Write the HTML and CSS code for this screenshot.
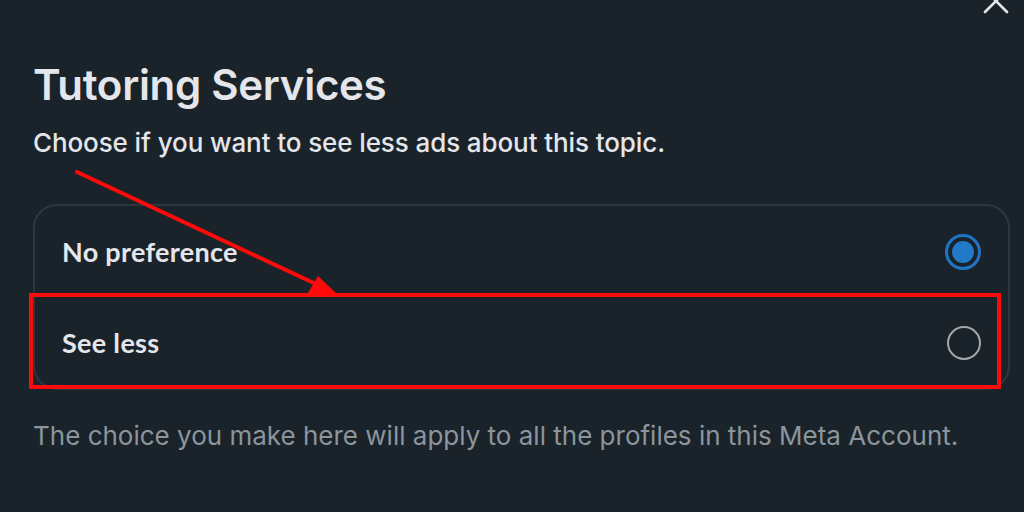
FILE: index.html
```html
<!DOCTYPE html>
<html>
<head>
<meta charset="utf-8">
<link rel="stylesheet" href="styles.css">
</head>
<body>
<div class="dialog">
  <button class="close" aria-label="Close">
    <svg width="30" height="30" viewBox="0 0 30 30"><path d="M4 4 L26 26 M26 4 L4 26" stroke="#e4e6eb" stroke-width="2.6" stroke-linecap="round" fill="none"/></svg>
  </button>
  <h1 class="title">Tutoring Services</h1>
  <p class="subtitle">Choose if you want to see less ads about this topic.</p>
  <div class="options">
    <label class="option">
      <span class="option-label">No preference</span>
      <span class="radio radio-on"><span class="dot"></span></span>
    </label>
    <label class="option">
      <span class="option-label">See less</span>
      <span class="radio"></span>
    </label>
  </div>
  <p class="footnote">The choice you make here will apply to all the profiles in this Meta Account.</p>
  <svg class="annot" width="1024" height="512" viewBox="0 0 1024 512">
    <rect x="31" y="295" width="968" height="92" fill="none" stroke="#ff0a0a" stroke-width="4"/>
    <line x1="77" y1="172" x2="318" y2="285" stroke="#ff0a0a" stroke-width="4" stroke-linecap="round"/>
    <polygon points="336,293 308,293 318,276" fill="#ff0a0a"/>
  </svg>
</div>
</body>
</html>
```

FILE: styles.css
```css
html, body {
  margin: 0;
  padding: 0;
  background: #1a2329;
}
body {
  width: 1024px;
  height: 512px;
  overflow: hidden;
  font-family: "Inter", "Noto Sans", sans-serif;
  color: #e4e6eb;
}
.dialog {
  position: relative;
  padding: 58px 14px 0 33px;
}
.close {
  position: absolute;
  top: -14px;
  right: 13px;
  background: none;
  border: 0;
  padding: 0;
  width: 30px;
  height: 30px;
}
.title {
  margin: 0;
  font-size: 42px;
  font-weight: 600;
  line-height: 54px;
  letter-spacing: -0.3px;
}
.subtitle {
  margin: 14px 0 0;
  font-size: 26px;
  font-weight: 500;
  line-height: 34px;
  letter-spacing: -0.1px;
}
.options {
  margin-top: 44px;
  border: 2px solid #2c3840;
  border-radius: 24px;
  display: flex;
  flex-direction: column;
}
.option {
  height: 91px;
  display: flex;
  align-items: center;
  justify-content: space-between;
  padding: 0 27px 0 27px;
}
.option-label {
  font-family: "Lato", "Inter", sans-serif;
  font-weight: 700;
  font-size: 27px;
  letter-spacing: 0.3px;
}
.radio {
  width: 30px;
  height: 30px;
  border: 2.5px solid #a3a8ad;
  border-radius: 50%;
  display: flex;
  align-items: center;
  justify-content: center;
}
.radio-on {
  border: 3px solid #1f74c4;
}
.dot {
  width: 22px;
  height: 22px;
  border-radius: 50%;
  background: #2279c7;
}
.footnote {
  margin: 29px 0 0;
  font-size: 26px;
  font-weight: 400;
  line-height: 34px;
  color: #8b959d;
  letter-spacing: 0;
}
.annot {
  position: absolute;
  left: 0;
  top: 0;
  pointer-events: none;
}
```
